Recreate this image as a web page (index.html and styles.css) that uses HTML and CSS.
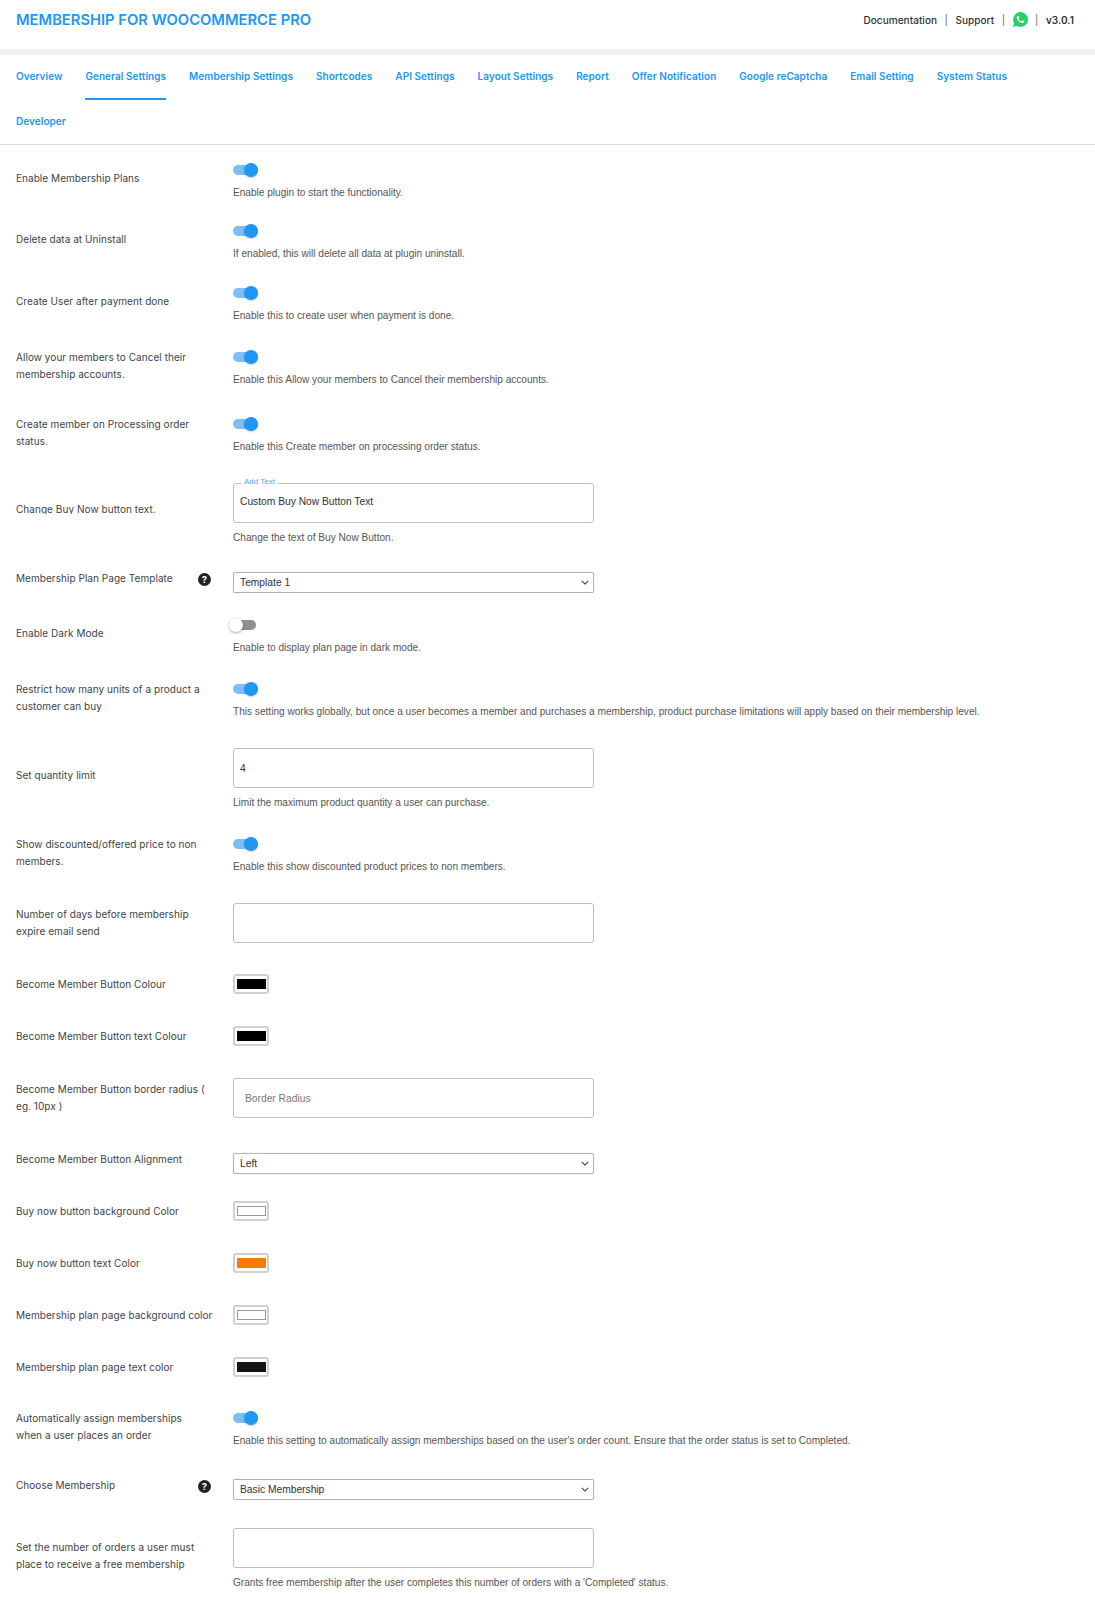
FILE: index.html
```html
<!DOCTYPE html>
<html lang="en">

<head>
    <meta charset="UTF-8">
    <meta name="viewport" content="width=device-width, initial-scale=1.0">
    <title>Membership for WooCommerce Pro</title>
    <link rel="stylesheet" href="styles.css">
</head>

<body>
    <!-- top bar -->
    <header class="topbar">
        <h1 class="brand">MEMBERSHIP FOR WOOCOMMERCE PRO</h1>
        <div class="toplinks">
            <a href="#">Documentation</a>
            <span class="sep">|</span>
            <a href="#">Support</a>
            <span class="sep">|</span>
            <svg class="wa" viewBox="0 0 24 24" xmlns="http://www.w3.org/2000/svg">
                <path fill="#25d366" d="M20.464 3.488A11.815 11.815 0 0012.05 0C5.495 0 .16 5.335.157 11.892c0 2.096.547 4.142 1.588 5.945L.057 24l6.305-1.654a11.882 11.882 0 005.683 1.448h.005c6.554 0 11.89-5.335 11.893-11.893a11.821 11.821 0 00-3.48-8.413z"></path>
                <path fill="#fff" d="M17.472 14.382c-.297-.149-1.758-.867-2.03-.967-.273-.099-.471-.148-.67.15-.197.297-.767.966-.94 1.164-.173.199-.347.223-.644.075-.297-.15-1.255-.463-2.39-1.475-.883-.788-1.48-1.761-1.653-2.059-.173-.297-.018-.458.13-.606.134-.133.298-.347.446-.52.149-.174.198-.298.298-.497.099-.198.05-.371-.025-.52-.075-.149-.669-1.612-.916-2.207-.242-.579-.487-.5-.669-.51-.173-.008-.371-.01-.57-.01-.198 0-.52.074-.792.372-.272.297-1.04 1.016-1.04 2.479 0 1.462 1.065 2.875 1.213 3.074.149.198 2.096 3.2 5.077 4.487.709.306 1.262.489 1.694.625.712.227 1.36.195 1.871.118.571-.085 1.758-.719 2.006-1.413.248-.694.248-1.289.173-1.413-.074-.124-.272-.198-.57-.347z"></path>
            </svg>
            <span class="sep">|</span>
            <span class="version">v3.0.1</span>
        </div>
    </header>

    <!-- tabs -->
    <nav class="tabs">
        <a href="#">Overview</a>
        <a href="#" class="active">General Settings</a>
        <a href="#">Membership Settings</a>
        <a href="#">Shortcodes</a>
        <a href="#">API Settings</a>
        <a href="#">Layout Settings</a>
        <a href="#">Report</a>
        <a href="#">Offer Notification</a>
        <a href="#">Google reCaptcha</a>
        <a href="#">Email Setting</a>
        <a href="#">System Status</a>
        <a href="#">Developer</a>
    </nav>

    <main class="settings">
        <div class="row has-help">
            <div class="label">Enable Membership Plans</div>
            <div class="field">
                <div class="toggle on"></div>
                <p class="help">Enable plugin to start the functionality.</p>
            </div>
        </div>
        <div class="row has-help mt20">
            <div class="label">Delete data at Uninstall</div>
            <div class="field">
                <div class="toggle on"></div>
                <p class="help">If enabled, this will delete all data at plugin uninstall.</p>
            </div>
        </div>
        <div class="row has-help mt21">
            <div class="label">Create User after payment done</div>
            <div class="field">
                <div class="toggle on"></div>
                <p class="help">Enable this to create user when payment is done.</p>
            </div>
        </div>
        <div class="row has-help mt23">
            <div class="label">Allow your members to Cancel their membership accounts.</div>
            <div class="field">
                <div class="toggle on"></div>
                <p class="help">Enable this Allow your members to Cancel their membership accounts.</p>
            </div>
        </div>
        <div class="row has-help mt26">
            <div class="label">Create member on Processing order status.</div>
            <div class="field">
                <div class="toggle on"></div>
                <p class="help">Enable this Create member on processing order status.</p>
            </div>
        </div>
        <div class="row input-help mt28">
            <div class="label"><span class="clipped">Change Buy Now button text.</span></div>
            <div class="field">
                <div class="outlined">
                    <span class="legend">Add Text</span>
                    <input class="text" type="text" value="Custom Buy Now Button Text">
                </div>
                <p class="help">Change the text of Buy Now Button.</p>
            </div>
        </div>
        <div class="row select-row mt26">
            <div class="label">Membership Plan Page Template</div>
            <span class="tip">?</span>
            <div class="field">
                <div class="select-wrap">
                    <select class="select"><option>Template 1</option></select>
                    <svg class="chev" viewBox="0 0 10 6" xmlns="http://www.w3.org/2000/svg"><path d="M1 1l4 4 4-4" fill="none" stroke="#333" stroke-width="1.3"></path></svg>
                </div>
            </div>
        </div>
        <div class="row has-help mt22">
            <div class="label">Enable Dark Mode</div>
            <div class="field">
                <div class="toggle"></div>
                <p class="help">Enable to display plan page in dark mode.</p>
            </div>
        </div>
        <div class="row has-help mt23">
            <div class="label">Restrict how many units of a product a customer can buy</div>
            <div class="field">
                <div class="toggle on"></div>
                <p class="help">This setting works globally, but once a user becomes a member and purchases a membership, product purchase limitations will apply based on their membership level.</p>
            </div>
        </div>
        <div class="row input-help mt28">
            <div class="label">Set quantity limit</div>
            <div class="field">
                <input class="text" type="text" value="4">
                <p class="help">Limit the maximum product quantity a user can purchase.</p>
            </div>
        </div>
        <div class="row has-help mt23">
            <div class="label">Show discounted/offered price to non members.</div>
            <div class="field">
                <div class="toggle on"></div>
                <p class="help">Enable this show discounted product prices to non members.</p>
            </div>
        </div>
        <div class="row mt28">
            <div class="label">Number of days before membership expire email send</div>
            <div class="field">
                <input class="text" type="text">
            </div>
        </div>
        <div class="row mt31">
            <div class="label">Become Member Button Colour</div>
            <div class="field"><div class="swatch"><i class="black"></i></div></div>
        </div>
        <div class="row mt32">
            <div class="label">Become Member Button text Colour</div>
            <div class="field"><div class="swatch"><i class="black"></i></div></div>
        </div>
        <div class="row mt32">
            <div class="label">Become Member Button border radius ( eg. 10px )</div>
            <div class="field">
                <input class="text pad-more" type="text" placeholder="Border Radius">
            </div>
        </div>
        <div class="row select-row mt35">
            <div class="label">Become Member Button Alignment</div>
            <div class="field">
                <div class="select-wrap">
                    <select class="select"><option>Left</option></select>
                    <svg class="chev" viewBox="0 0 10 6" xmlns="http://www.w3.org/2000/svg"><path d="M1 1l4 4 4-4" fill="none" stroke="#333" stroke-width="1.3"></path></svg>
                </div>
            </div>
        </div>
        <div class="row mt27">
            <div class="label">Buy now button background Color</div>
            <div class="field"><div class="swatch"><i class="white"></i></div></div>
        </div>
        <div class="row mt32">
            <div class="label">Buy now button text Color</div>
            <div class="field"><div class="swatch"><i class="orange"></i></div></div>
        </div>
        <div class="row mt32">
            <div class="label">Membership plan page background color</div>
            <div class="field"><div class="swatch"><i class="white"></i></div></div>
        </div>
        <div class="row mt32">
            <div class="label">Membership plan page text color</div>
            <div class="field"><div class="swatch"><i class="dark"></i></div></div>
        </div>
        <div class="row has-help mt31">
            <div class="label">Automatically assign memberships<br>when a user places an order</div>
            <div class="field">
                <div class="toggle on"></div>
                <p class="help">Enable this setting to automatically assign memberships based on the user's order count. Ensure that the order status is set to Completed.</p>
            </div>
        </div>
        <div class="row select-row mt30">
            <div class="label">Choose Membership</div>
            <span class="tip">?</span>
            <div class="field">
                <div class="select-wrap">
                    <select class="select"><option>Basic Membership</option></select>
                    <svg class="chev" viewBox="0 0 10 6" xmlns="http://www.w3.org/2000/svg"><path d="M1 1l4 4 4-4" fill="none" stroke="#333" stroke-width="1.3"></path></svg>
                </div>
            </div>
        </div>
        <div class="row input-help mt28">
            <div class="label">Set the number of orders a user must place to receive a free membership</div>
            <div class="field">
                <input class="text" type="text">
                <p class="help">Grants free membership after the user completes this number of orders with a 'Completed' status.</p>
            </div>
        </div>
    </main>
</body>

</html>
```

FILE: styles.css
```css
* {
    box-sizing: border-box;
}
body {
    margin: 0;
    background: #fff;
    font-family: "Inter", "Noto Sans", sans-serif;
    color: #3c434a;
}

/* top bar */
.topbar {
    height: 55px;
    padding: 0 21px 10px 16px;
    display: flex;
    align-items: center;
    justify-content: space-between;
    border-bottom: 6px solid #f0f0f1;
}
.brand {
    margin: 0;
    font-size: 14.75px;
    font-weight: 600;
    color: #2196f3;
}
.toplinks {
    display: flex;
    align-items: center;
    font-size: 10px;
    font-weight: 500;
    letter-spacing: .05px;
    color: #2c3338;
}
.toplinks a {
    color: #2c3338;
    text-decoration: none;
}
.sep {
    margin: 0 7.5px;
    font-weight: 400;
    color: #666;
}
.wa {
    width: 15px;
    height: 15px;
}
.version {
    font-weight: 600;
}

/* tabs */
.tabs {
    height: 89px;
    padding-left: 16px;
    max-width: 1060px;
    display: flex;
    flex-wrap: wrap;
    align-content: flex-start;
    column-gap: 23px;
    font-size: 10px;
    font-weight: 600;
    letter-spacing: .05px;
}
.tabs a {
    height: 45px;
    line-height: 42px;
    color: #2196f3;
    text-decoration: none;
    border-bottom: 2px solid transparent;
}
.tabs a.active {
    border-bottom-color: #2196f3;
}

/* settings rows */
.settings {
    border-top: 1px solid #dcdcde;
    padding: 15px 16px 0;
}
.row {
    display: flex;
    align-items: center;
    position: relative;
}
.label {
    width: 217px;
    padding-right: 20px;
    font-size: 10px;
    line-height: 17px;
    letter-spacing: .05px;
    color: #3c434a;
}
.has-help > .label {
    padding-bottom: 4px;
}
.input-help > .label {
    padding-bottom: 8px;
}
.select-row > .label {
    margin-top: -9px;
}
.clipped {
    display: block;
    height: 11px;
    margin-bottom: 5px;
    line-height: 13px;
    overflow: hidden;
}
.field {
    flex: 1;
    min-width: 0;
}
.help {
    margin: 5px 0 0;
    font-family: "Liberation Sans", Arial, sans-serif;
    font-size: 10.1px;
    line-height: 16px;
    color: #555;
    white-space: nowrap;
}
.input-help .help {
    margin-top: 7px;
}

.mt20 { margin-top: 20px; }
.mt21 { margin-top: 21px; }
.mt22 { margin-top: 22px; }
.mt23 { margin-top: 23px; }
.mt26 { margin-top: 26px; }
.mt27 { margin-top: 27px; }
.mt28 { margin-top: 28px; }
.mt30 { margin-top: 30px; }
.mt31 { margin-top: 31px; }
.mt32 { margin-top: 32px; }
.mt35 { margin-top: 35px; }

/* toggle */
.toggle {
    position: relative;
    width: 25px;
    height: 20px;
}
.toggle::before {
    content: "";
    position: absolute;
    left: 0;
    top: 5px;
    width: 23px;
    height: 10px;
    border-radius: 5px;
    background: #8f8f8f;
}
.toggle::after {
    content: "";
    position: absolute;
    left: -4px;
    top: 3px;
    width: 14px;
    height: 14px;
    border-radius: 50%;
    background: #fff;
    box-shadow: 0 1px 3px rgba(0, 0, 0, .35);
}
.toggle.on::before {
    width: 25px;
    background: #7fbdf5;
}
.toggle.on::after {
    left: 11px;
    background: #2196f3;
    box-shadow: 0 1px 2px rgba(0, 0, 0, .2);
}

/* inputs */
.text {
    display: block;
    width: 361px;
    height: 40px;
    padding: 0 6px;
    margin: 0;
    border: 1px solid #bdbdbd;
    border-radius: 3px;
    background: #fff;
    font-family: "Liberation Sans", Arial, sans-serif;
    font-size: 10.25px;
    color: #2c3338;
}
.text::placeholder {
    color: #777;
}
.pad-more {
    padding-left: 11px;
}
.outlined {
    position: relative;
}
.legend {
    position: absolute;
    left: 8px;
    top: -6px;
    padding: 0 3px;
    background: #fff;
    font-family: "Liberation Sans", Arial, sans-serif;
    font-size: 8px;
    line-height: 10px;
    color: #4aa8f5;
}
.outlined .text {
    padding-bottom: 3px;
}

/* select */
.select-wrap {
    position: relative;
    width: 361px;
}
.select {
    display: block;
    width: 100%;
    height: 21px;
    padding: 0 6px;
    margin: 0;
    appearance: none;
    border: 1px solid #b4b4b4;
    border-radius: 2px;
    background: #fff;
    box-shadow: 0 0 1px rgba(0, 0, 0, .25);
    font-family: "Liberation Sans", Arial, sans-serif;
    font-size: 10.25px;
    color: #2c3338;
}
.chev {
    position: absolute;
    right: 5px;
    top: 8px;
    width: 8px;
    height: 5px;
}

/* help mark next to a label */
.tip {
    position: absolute;
    left: 182px;
    top: 1px;
    width: 13px;
    height: 13px;
    border-radius: 50%;
    background: #222;
    color: #fff;
    font-size: 9.5px;
    font-weight: 700;
    line-height: 13px;
    text-align: center;
}

/* colour picker */
.swatch {
    width: 36px;
    height: 20px;
    padding: 3px 1.5px;
    border: 2px solid #d0d0d0;
    border-radius: 3px;
    background: #fff;
}
.swatch i {
    display: block;
    height: 100%;
}
.swatch .black {
    background: #000;
}
.swatch .dark {
    background: #141414;
}
.swatch .orange {
    background: #f57c00;
}
.swatch .white {
    background: #fff;
    border: 1px solid #999;
}
```
